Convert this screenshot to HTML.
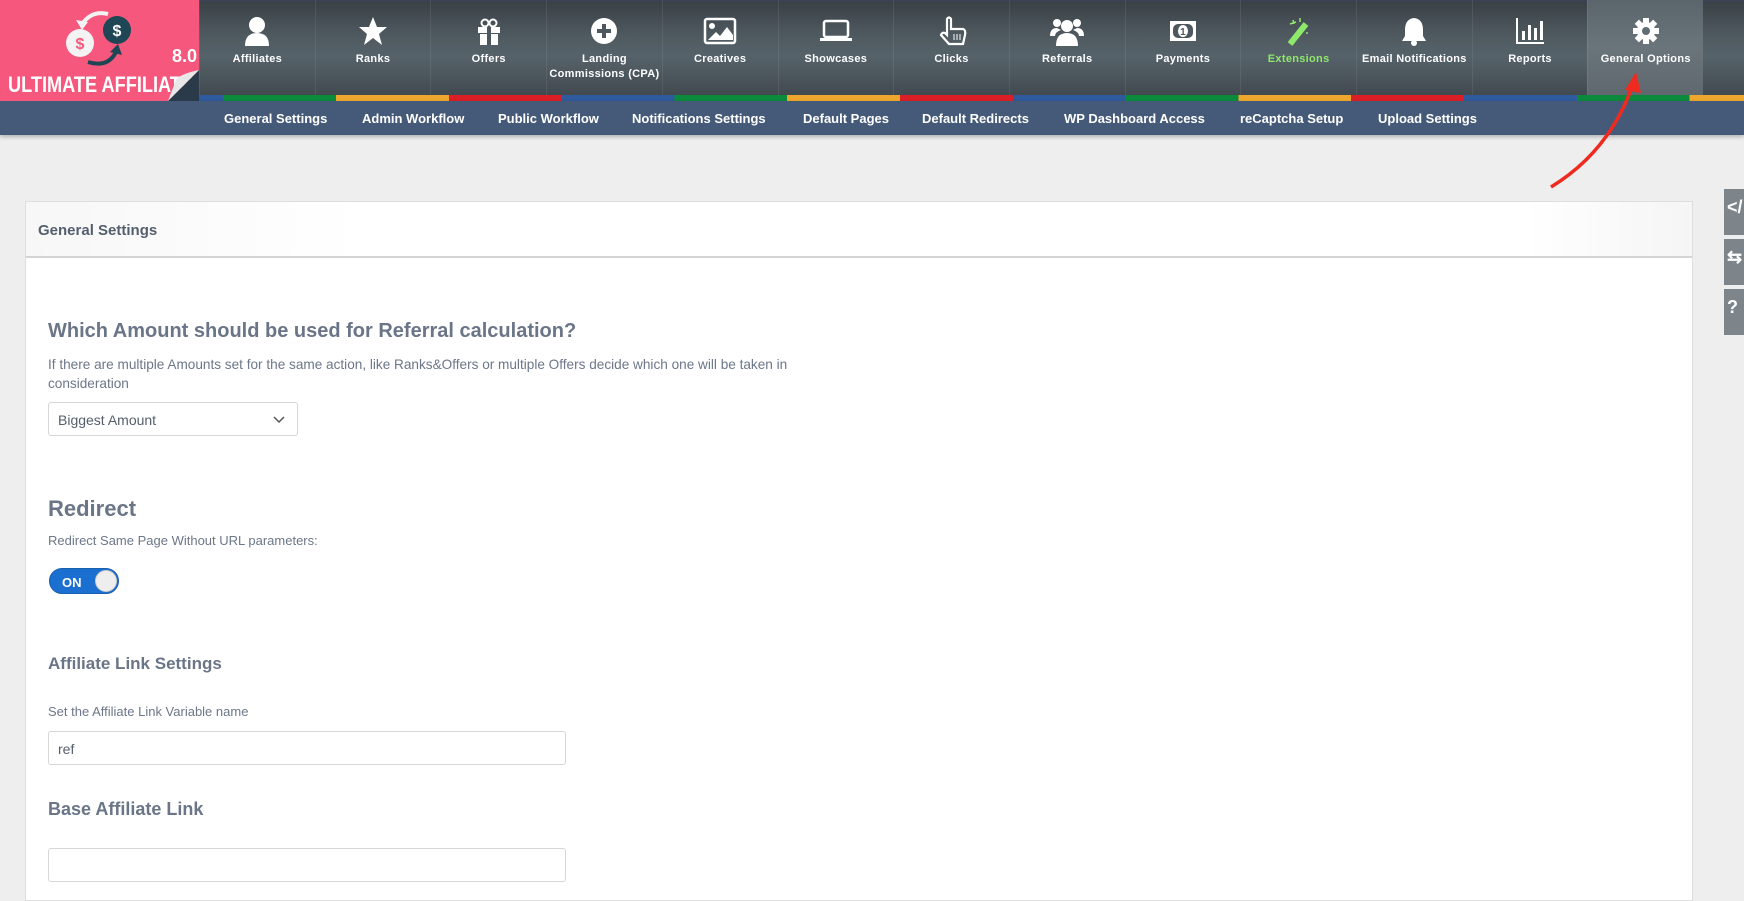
<!DOCTYPE html>
<html><head><meta charset="utf-8"><style>
*{box-sizing:border-box;margin:0;padding:0}
body{width:1744px;height:860px;overflow:hidden;background:#eeeeee;font-family:"Liberation Sans",Arial,sans-serif;position:relative}
#top{position:absolute;left:0;top:0;width:1744px;height:100px;background:linear-gradient(#3a4146 0%,#4f5a60 35%,#56626a 55%,#3f474c 100%);border-top:2px solid #3b4252}
#logo{position:absolute;left:0;top:0;width:199px;height:101px;background:#f5587c;overflow:hidden;z-index:3}
.item{position:absolute;top:0;width:115.7px;height:95px;border-left:1px solid rgba(255,255,255,0.08);color:#fff;font-size:11px;font-weight:bold;text-align:center;letter-spacing:0.3px}
.item .ic{position:absolute;top:14px;left:0;width:100%;height:34px;display:flex;justify-content:center;align-items:center}
.item .lb{position:absolute;top:52px;left:0;width:100%;line-height:15px}
.item.active{background:linear-gradient(#5a656c,#6a757b 50%,#5e686e)}
#stripe{position:absolute;left:199px;top:95px;width:1545px;height:6px;overflow:hidden}
#stripe div{position:absolute;left:-427px;top:0;width:2200px;height:6px;background:repeating-linear-gradient(90deg,#0b8a3c 0,#0b8a3c 112.8px,#eea72c 112.8px,#eea72c 225.6px,#dc1f26 225.6px,#dc1f26 338.4px,#2f5a9e 338.4px,#2f5a9e 451.2px)}
#sub{position:absolute;left:0;top:101px;width:1744px;height:34px;background:#455a78;box-shadow:0 2px 4px rgba(0,0,0,0.25)}
#sub span{position:absolute;top:10px;color:#fff;font-size:13px;font-weight:bold}
#panel{position:absolute;left:25px;top:201px;width:1668px;height:700px;background:#fff;border:1px solid #dedede}
#ph{height:56px;border-bottom:2px solid #d4d4d4;background:linear-gradient(90deg,#f7f7f7,#fff 20%,#fff 90%,#f5f5f5)}
#ph span{position:absolute;left:12px;top:20px;font-size:15px;font-weight:bold;color:#545f6e}
.t{position:absolute;color:#6c7789}
.tabs{position:absolute;left:1724px;width:22px;height:46px;background:#7d858b;color:#fff;font-size:18px;font-weight:bold;padding:8px 0 0 3px}
</style></head><body>
<div id="top"></div>
<div id="logo">
 <svg width="199" height="101" viewBox="0 0 199 101">
  <circle cx="80" cy="43" r="14" fill="#f3f3f3"/>
  <text x="80" y="49" fill="#f5587c" font-size="16" font-weight="bold" text-anchor="middle" font-family="Liberation Sans">$</text>
  <circle cx="117" cy="30" r="14" fill="#1e4654"/>
  <text x="117" y="36" fill="#fff" font-size="16" font-weight="bold" text-anchor="middle" font-family="Liberation Sans">$</text>
  <path d="M108 14 Q92 10 82 24" stroke="#f3f3f3" stroke-width="4" fill="none"/><path d="M76 20 L82 30 L88 22Z" fill="#f3f3f3"/>
  <path d="M88 62 Q108 68 116 52" stroke="#1e4654" stroke-width="4" fill="none"/><path d="M110 52 L118 44 L122 55Z" fill="#1e4654"/>
  <text x="172" y="62" fill="#fff" font-size="18" font-weight="bold" font-family="Liberation Sans">8.0</text>
  <text x="8" y="92" fill="#fff" font-size="22" font-weight="bold" font-family="Liberation Sans" textLength="185" lengthAdjust="spacingAndGlyphs">ULTIMATE AFFILIATE</text>
  <path d="M168 101 L199 70 L199 101Z" fill="#2b3a48"/><path d="M168 101 L199 70 Q180 74 176 80Z" fill="#e8e8e8"/>
 </svg>
</div>
<div id="items"></div>
<div id="stripe"><div></div></div>
<div id="sub">
<span style="left:224px">General Settings</span><span style="left:362px">Admin Workflow</span><span style="left:498px">Public Workflow</span><span style="left:632px">Notifications Settings</span><span style="left:803px">Default Pages</span><span style="left:922px">Default Redirects</span><span style="left:1064px">WP Dashboard Access</span><span style="left:1240px">reCaptcha Setup</span><span style="left:1378px">Upload Settings</span>
</div>
<svg style="position:absolute;left:1540px;top:66px" width="110" height="130"><path d="M11 121 Q70 85 93 18" stroke="#ef2a1f" stroke-width="3.5" fill="none"/><path d="M85 24 L96 6 L101 27Z" fill="#ef2a1f"/></svg>
<div id="panel">
<div id="ph"><span>General Settings</span></div>
<div class="t" style="left:22px;top:118px;font-size:20px;font-weight:bold;color:#6a7587">Which Amount should be used for Referral calculation?</div>
<div class="t" style="left:22px;top:153px;font-size:13.6px;line-height:19px;width:780px">If there are multiple Amounts set for the same action, like Ranks&amp;Offers or multiple Offers decide which one will be taken in consideration</div>
<div style="position:absolute;left:22px;top:200px;width:250px;height:34px;border:1px solid #d6d6d6;border-radius:3px;font-size:14px;color:#555f6c;padding:9px 0 0 9px">Biggest Amount<svg style="position:absolute;right:12px;top:13px" width="12" height="8"><path d="M1 1 L6 6 L11 1" stroke="#555" stroke-width="1.5" fill="none"/></svg></div>
<div class="t" style="left:22px;top:294px;font-size:22px;font-weight:bold;color:#6a7587">Redirect</div>
<div class="t" style="left:22px;top:331px;font-size:13px">Redirect Same Page Without URL parameters:</div>
<div style="position:absolute;left:23px;top:366px;width:70px;height:26px;border-radius:13px;background:#1b6fd0;border:1px solid #1b5fb0"><span style="position:absolute;left:12px;top:6px;color:#fff;font-size:13px;font-weight:bold">ON</span><div style="position:absolute;right:1px;top:1px;width:22px;height:22px;border-radius:50%;background:#eee;border:1px solid #ccc"></div></div>
<div class="t" style="left:22px;top:452px;font-size:17px;font-weight:bold;color:#6a7587">Affiliate Link Settings</div>
<div class="t" style="left:22px;top:502px;font-size:13px">Set the Affiliate Link Variable name</div>
<div style="position:absolute;left:22px;top:529px;width:518px;height:34px;border:1px solid #d6d6d6;border-radius:3px;font-size:14px;color:#555f6c;padding:9px 0 0 9px">ref</div>
<div class="t" style="left:22px;top:597px;font-size:18px;font-weight:bold;color:#6a7587">Base Affiliate Link</div>
<div style="position:absolute;left:22px;top:646px;width:518px;height:34px;border:1px solid #d6d6d6;border-radius:3px"></div>
</div>
<div class="tabs" style="top:189px">&lt;/</div>
<div class="tabs" style="top:239px">&#8646;</div>
<div class="tabs" style="top:289px">?</div>
<script>
var items=[["Affiliates",'<svg width="26" height="30"><circle cx="13" cy="9" r="8" fill="#fff"/><path d="M1 30 Q1 17 13 17 Q25 17 25 30Z" fill="#fff"/></svg>'],
["Ranks",'<svg width="30" height="30"><path d="M15 1 L19 11 L29 11 L21 18 L24 29 L15 22 L6 29 L9 18 L1 11 L11 11Z" fill="#fff"/></svg>'],
["Offers",'<svg width="26" height="30"><rect x="2" y="11" width="22" height="6" fill="#fff"/><rect x="4" y="18" width="18" height="11" fill="#fff"/><rect x="11" y="11" width="4" height="18" fill="#4d575d"/><circle cx="9" cy="7" r="3.5" stroke="#fff" stroke-width="2" fill="none"/><circle cx="17" cy="7" r="3.5" stroke="#fff" stroke-width="2" fill="none"/></svg>'],
["Landing<br>Commissions (CPA)",'<svg width="28" height="28"><circle cx="14" cy="14" r="13" fill="#fff"/><path d="M14 7V21M7 14H21" stroke="#4d575d" stroke-width="4"/></svg>'],
["Creatives",'<svg width="34" height="28"><rect x="2" y="2" width="30" height="24" rx="2" stroke="#fff" stroke-width="2.5" fill="none"/><circle cx="9" cy="9" r="3" fill="#fff"/><path d="M5 23 L13 15 L17 19 L24 10 L30 18 V23Z" fill="#fff"/></svg>'],
["Showcases",'<svg width="34" height="26"><rect x="5" y="3" width="24" height="16" rx="2" stroke="#fff" stroke-width="2.5" fill="none"/><rect x="1" y="20" width="32" height="3" fill="#fff"/></svg>'],
["Clicks",'<svg width="30" height="32"><path d="M10 20 V4 Q12 1 14 4 V14 H26 Q29 15 28 20 L26 29 H12 L4 20 Q5 17 8 18Z" stroke="#fff" stroke-width="2.2" fill="none"/><path d="M17 19V25M20 19V25M23 19V25" stroke="#fff" stroke-width="1"/></svg>'],
["Referrals",'<svg width="34" height="30"><circle cx="17" cy="10" r="6" fill="#fff"/><circle cx="7" cy="7" r="4" fill="#fff"/><circle cx="27" cy="7" r="4" fill="#fff"/><path d="M6 30 Q6 17 17 17 Q28 17 28 30Z" fill="#fff"/><path d="M0 20 Q0 12 7 12 L11 14 Q5 16 5 20Z" fill="#fff"/><path d="M34 20 Q34 12 27 12 L23 14 Q29 16 29 20Z" fill="#fff"/></svg>'],
["Payments",'<svg width="28" height="22"><rect x="1" y="1" width="26" height="20" fill="#fff"/><rect x="4" y="4" width="20" height="14" rx="5" fill="#4d575d"/><ellipse cx="14" cy="11" rx="5" ry="6" fill="#fff"/><text x="14" y="15" font-size="10" font-weight="bold" text-anchor="middle" fill="#4d575d" font-family="Liberation Sans">1</text></svg>'],
["Extensions",'<svg width="26" height="30"><path d="M4 28 L20 8" stroke="#8ee86a" stroke-width="6"/><path d="M7 4L8 8M4 8L10 6M14 2V6M21 16V18" stroke="#8ee86a" stroke-width="1.5"/></svg>'],
["Email Notifications",'<svg width="26" height="30"><path d="M13 2 Q22 3 22 14 L22 20 L25 25 H1 L4 20 L4 14 Q4 3 13 2Z" fill="#fff"/><circle cx="13" cy="27" r="3" fill="#fff"/></svg>'],
["Reports",'<svg width="30" height="28"><path d="M2 1V26H29" stroke="#fff" stroke-width="2" fill="none"/><rect x="7" y="14" width="3" height="9" fill="#fff"/><rect x="13" y="8" width="3" height="15" fill="#fff"/><rect x="19" y="11" width="3" height="12" fill="#fff"/><rect x="25" y="4" width="3" height="19" fill="#fff"/></svg>'],
["General Options",'<svg width="28" height="28" viewBox="0 0 28 28"><g fill="#fff"><circle cx="14" cy="14" r="9"/><rect x="11" y="1" width="6" height="26"/><rect x="1" y="11" width="26" height="6"/><rect x="11" y="1" width="6" height="26" transform="rotate(45 14 14)"/><rect x="11" y="1" width="6" height="26" transform="rotate(-45 14 14)"/></g><circle cx="14" cy="14" r="4" fill="#626d73"/></svg>']];
var h='';items.forEach(function(it,i){h+='<div class="item'+(i==12?' active':'')+'" style="left:'+(199+i*115.7)+'px;'+(i==9?'color:#8ee86a':'')+'"><div class="ic">'+it[1]+'</div><div class="lb">'+it[0]+'</div></div>'});
document.getElementById('items').innerHTML=h;
</script>
</body></html>
